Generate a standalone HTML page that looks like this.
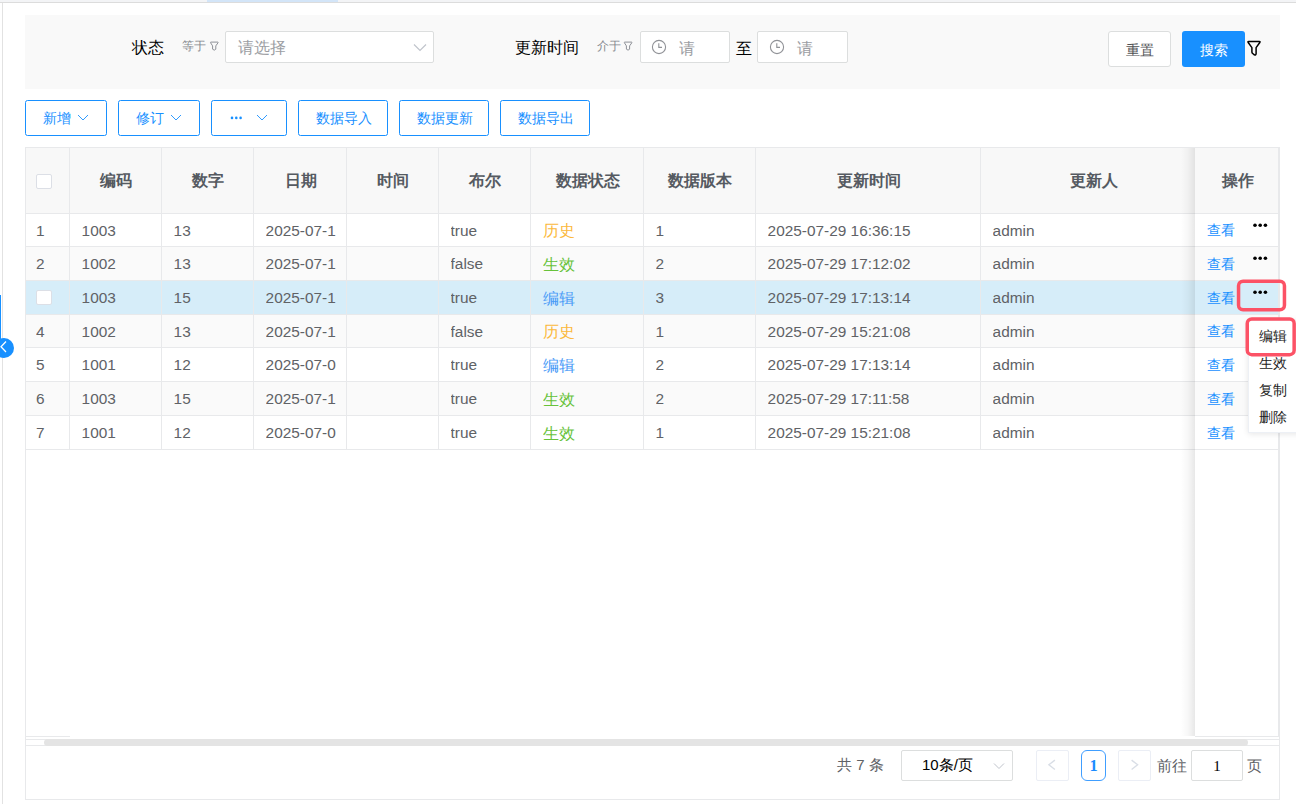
<!DOCTYPE html>
<html><head><meta charset="utf-8">
<style>
*{box-sizing:border-box;margin:0;padding:0}
html,body{width:1296px;height:804px;overflow:hidden;background:#fff;font-family:"Liberation Sans",sans-serif;}
.a{position:absolute}
.topstrip{left:0;top:0;width:1296px;height:2px;background:#f3f4f6}
.topline{left:0;top:2px;width:1296px;height:1px;background:#dcdcdc}
.toptab{left:207px;top:0;width:131px;height:2px;background:#d3e5f8}
.leftline{left:2px;top:3px;width:1px;height:801px;background:#e2e2e2}
.panel{left:25px;top:15px;width:1255px;height:74px;background:#f9f9f9}
.lbl{font-size:16px;color:#000;line-height:16px;white-space:nowrap}
.op{font-size:12px;color:#86898f;line-height:12px;white-space:nowrap}
.inp{background:#fff;border:1px solid #dcdede;border-radius:2px}
.ph{font-size:16px;color:#9c9ea3;line-height:16px;white-space:nowrap}
.btn{border:1px solid #1890ff;border-radius:2.5px;background:#fff;color:#1890ff;font-size:14px;line-height:14px;white-space:nowrap}
.btn span{position:absolute;top:10px}
.tbl{left:25px;top:147px;width:1255px;height:653px;border:1px solid #ebeef5}
.hdr{background:#f8f8f8}
.hl{font-size:16px;font-weight:bold;color:#555a61;line-height:16px;white-space:nowrap}
.cell{font-size:15.4px;color:#606266;line-height:15px;white-space:nowrap;overflow:hidden}
.vl{width:1px;background:#e8e9eb}
.hz{height:1px;background:#e8e9eb}
.cb{width:16px;height:15px;border:1px solid #dcdfe6;border-radius:2px;background:#fff}
.link{font-size:13.5px;color:#1890ff;line-height:13.5px;white-space:nowrap}
.dots{width:15px;height:5px}
.dots i{position:absolute;top:0;width:4.2px;height:4.2px;border-radius:50%;background:#000}
.menu{font-size:14px;color:#222;line-height:14px;white-space:nowrap}
.red{border:4px solid #f04c64;border-radius:6px}
</style></head><body>
<div class="a topstrip"></div>
<div class="a toptab"></div>
<div class="a topline"></div>
<div class="a leftline"></div>

<!-- search panel -->
<div class="a panel"></div>
<div class="a lbl" style="left:132px;top:40px">状态</div>
<div class="a op" style="left:182px;top:40px">等于</div>
<svg class="a" style="left:208px;top:39px" width="13" height="14" viewBox="208 39 13 14"><path d="M210.90 42.1H217.70Q218.40 42.1 218.00 42.8L215.80 45.9V49.2Q214.30 51.1 212.60 49.2V45.9L210.60 42.8Q210.20 42.1 210.90 42.1Z" fill="none" stroke="#8d9097" stroke-width="1" stroke-linejoin="round"/></svg>
<div class="a inp" style="left:225px;top:31px;width:209px;height:32px"></div>
<div class="a ph" style="left:238px;top:40px">请选择</div>
<svg class="a" style="left:413px;top:43px" width="14" height="9" viewBox="0 0 14 9"><path d="M1 1.5L7 7.5L13 1.5" fill="none" stroke="#c0c4cc" stroke-width="1.2"/></svg>

<div class="a lbl" style="left:514.5px;top:40px">更新时间</div>
<div class="a op" style="left:597px;top:40px">介于</div>
<svg class="a" style="left:622px;top:39px" width="13" height="14" viewBox="622 39 13 14"><path d="M624.70 42.1H631.50Q632.20 42.1 631.80 42.8L629.60 45.9V49.2Q628.10 51.1 626.40 49.2V45.9L624.40 42.8Q624.00 42.1 624.70 42.1Z" fill="none" stroke="#8d9097" stroke-width="1" stroke-linejoin="round"/></svg>
<div class="a inp" style="left:640px;top:31px;width:90px;height:32px"></div>
<svg class="a" style="left:651px;top:39px" width="16" height="16" viewBox="0 0 16 16"><circle cx="8" cy="8" r="6.6" fill="none" stroke="#909297" stroke-width="1.1"/><path d="M7.8 4.2V8.4H11" fill="none" stroke="#909297" stroke-width="1.1"/></svg>
<div class="a ph" style="left:679px;top:40.5px;width:17px;overflow:hidden">请</div>
<div class="a lbl" style="left:736px;top:41px">至</div>
<div class="a inp" style="left:757px;top:31px;width:91px;height:32px"></div>
<svg class="a" style="left:769px;top:39px" width="16" height="16" viewBox="0 0 16 16"><circle cx="8" cy="8" r="6.6" fill="none" stroke="#909297" stroke-width="1.1"/><path d="M7.8 4.2V8.4H11" fill="none" stroke="#909297" stroke-width="1.1"/></svg>
<div class="a ph" style="left:797px;top:40.5px">请</div>

<div class="a inp" style="left:1108px;top:31px;width:63px;height:36px;border-color:#dcdede;border-radius:3px"></div>
<div class="a" style="left:1126px;top:43px;font-size:14px;line-height:14px;color:#505255">重置</div>
<div class="a" style="left:1182px;top:31px;width:63px;height:36px;background:#1890ff;border-radius:3px"></div>
<div class="a" style="left:1200px;top:43px;font-size:14px;line-height:14px;color:#fff">搜索</div>
<svg class="a" style="left:1245px;top:38px" width="18" height="20" viewBox="1245 38 18 20"><path d="M1248.7 41.4H1259.3Q1260.5 41.4 1259.8 42.5L1256.1 47.6V53.7Q1255.9 55.5 1254.4 54.9L1252.7 53.5Q1251.9 52.9 1251.9 52V47.6L1248.2 42.5Q1247.5 41.4 1248.7 41.4Z" fill="none" stroke="#000" stroke-width="1.5" stroke-linejoin="round"/></svg>

<!-- toolbar -->
<div class="a btn" style="left:25px;top:100px;width:82px;height:36px"><span style="left:17px">新增</span></div>
<svg class="a" style="left:77px;top:114px" width="12" height="8" viewBox="0 0 12 8"><path d="M1 1L6 6L11 1" fill="none" stroke="#1890ff" stroke-width="0.9"/></svg>
<div class="a btn" style="left:118px;top:100px;width:82px;height:36px"><span style="left:17px">修订</span></div>
<svg class="a" style="left:170px;top:114px" width="12" height="8" viewBox="0 0 12 8"><path d="M1 1L6 6L11 1" fill="none" stroke="#1890ff" stroke-width="0.9"/></svg>
<div class="a btn" style="left:211px;top:100px;width:76px;height:36px"></div>
<svg class="a" style="left:230px;top:116px" width="14" height="4" viewBox="0 0 14 4"><circle cx="2" cy="1.9" r="1.3" fill="#1890ff"/><circle cx="6.3" cy="1.9" r="1.3" fill="#1890ff"/><circle cx="10.6" cy="1.9" r="1.3" fill="#1890ff"/></svg>
<svg class="a" style="left:256px;top:114px" width="12" height="8" viewBox="0 0 12 8"><path d="M1 1L6 6L11 1" fill="none" stroke="#1890ff" stroke-width="0.9"/></svg>
<div class="a btn" style="left:298px;top:100px;width:90px;height:36px"><span style="left:17px">数据导入</span></div>
<div class="a btn" style="left:399px;top:100px;width:90px;height:36px"><span style="left:17px">数据更新</span></div>
<div class="a btn" style="left:500px;top:100px;width:90px;height:36px"><span style="left:17px">数据导出</span></div>


































<!-- TABLE -->

<div class="a" style="left:25px;top:147px;width:1255px;height:653px;border:1px solid #e8e9eb"></div>
<div class="a hdr" style="left:26px;top:148px;width:1253px;height:65px"></div>
<div class="a hz" style="left:26px;top:213px;width:1253px"></div>
<div class="a" style="left:26px;top:214px;width:1253px;height:32px;background:#fff"></div>
<div class="a hz" style="left:26px;top:246px;width:1253px"></div>
<div class="a" style="left:26px;top:247px;width:1253px;height:33px;background:#fafafa"></div>
<div class="a hz" style="left:26px;top:280px;width:1253px"></div>
<div class="a" style="left:26px;top:281px;width:1253px;height:33px;background:#d6edf9"></div>
<div class="a hz" style="left:26px;top:314px;width:1253px"></div>
<div class="a" style="left:26px;top:315px;width:1253px;height:32px;background:#fafafa"></div>
<div class="a hz" style="left:26px;top:347px;width:1253px"></div>
<div class="a" style="left:26px;top:348px;width:1253px;height:33px;background:#fff"></div>
<div class="a hz" style="left:26px;top:381px;width:1253px"></div>
<div class="a" style="left:26px;top:382px;width:1253px;height:33px;background:#fafafa"></div>
<div class="a hz" style="left:26px;top:415px;width:1253px"></div>
<div class="a" style="left:26px;top:416px;width:1253px;height:33px;background:#fff"></div>
<div class="a hz" style="left:26px;top:449px;width:1253px"></div>
<div class="a vl" style="left:69px;top:148px;height:301px"></div>
<div class="a vl" style="left:161px;top:148px;height:301px"></div>
<div class="a vl" style="left:253px;top:148px;height:301px"></div>
<div class="a vl" style="left:346px;top:148px;height:301px"></div>
<div class="a vl" style="left:438px;top:148px;height:301px"></div>
<div class="a vl" style="left:530px;top:148px;height:301px"></div>
<div class="a vl" style="left:643px;top:148px;height:301px"></div>
<div class="a vl" style="left:755px;top:148px;height:301px"></div>
<div class="a vl" style="left:980px;top:148px;height:301px"></div>
<div class="a hl" style="left:70px;top:173px;width:92px;text-align:center">编码</div>
<div class="a hl" style="left:162px;top:173px;width:92px;text-align:center">数字</div>
<div class="a hl" style="left:254px;top:173px;width:93px;text-align:center">日期</div>
<div class="a hl" style="left:347px;top:173px;width:92px;text-align:center">时间</div>
<div class="a hl" style="left:439px;top:173px;width:92px;text-align:center">布尔</div>
<div class="a hl" style="left:531px;top:173px;width:113px;text-align:center">数据状态</div>
<div class="a hl" style="left:644px;top:173px;width:112px;text-align:center">数据版本</div>
<div class="a hl" style="left:756px;top:173px;width:225px;text-align:center">更新时间</div>
<div class="a hl" style="left:986px;top:173px;width:215px;text-align:center">更新人</div>
<div class="a hl" style="left:1196px;top:173px;width:84px;text-align:center">操作</div>
<div class="a cb" style="left:36px;top:174px"></div>
<div class="a cell" style="left:36px;top:222.5px">1</div>
<div class="a cell" style="left:81.6px;top:222.5px;width:70px">1003</div>
<div class="a cell" style="left:173.6px;top:222.5px;width:70px">13</div>
<div class="a cell" style="left:265.6px;top:222.5px;width:70.5px">2025-07-16</div>
<div class="a cell" style="left:450.6px;top:222.5px;width:70px">true</div>
<div class="a cell" style="left:542.5px;top:223.0px;color:#fbb93c;font-size:16px">历史</div>
<div class="a cell" style="left:655.6px;top:222.5px;width:90px">1</div>
<div class="a cell" style="left:767.6px;top:222.5px;width:203px">2025-07-29 16:36:15</div>
<div class="a cell" style="left:992.6px;top:222.5px;width:193px">admin</div>
<div class="a cell" style="left:36px;top:256.0px">2</div>
<div class="a cell" style="left:81.6px;top:256.0px;width:70px">1002</div>
<div class="a cell" style="left:173.6px;top:256.0px;width:70px">13</div>
<div class="a cell" style="left:265.6px;top:256.0px;width:70.5px">2025-07-16</div>
<div class="a cell" style="left:450.6px;top:256.0px;width:70px">false</div>
<div class="a cell" style="left:542.5px;top:256.5px;color:#67c23a;font-size:16px">生效</div>
<div class="a cell" style="left:655.6px;top:256.0px;width:90px">2</div>
<div class="a cell" style="left:767.6px;top:256.0px;width:203px">2025-07-29 17:12:02</div>
<div class="a cell" style="left:992.6px;top:256.0px;width:193px">admin</div>
<div class="a cb" style="left:36px;top:290px"></div>
<div class="a cell" style="left:81.6px;top:290.0px;width:70px">1003</div>
<div class="a cell" style="left:173.6px;top:290.0px;width:70px">15</div>
<div class="a cell" style="left:265.6px;top:290.0px;width:70.5px">2025-07-16</div>
<div class="a cell" style="left:450.6px;top:290.0px;width:70px">true</div>
<div class="a cell" style="left:542.5px;top:290.5px;color:#4a9bf7;font-size:16px">编辑</div>
<div class="a cell" style="left:655.6px;top:290.0px;width:90px">3</div>
<div class="a cell" style="left:767.6px;top:290.0px;width:203px">2025-07-29 17:13:14</div>
<div class="a cell" style="left:992.6px;top:290.0px;width:193px">admin</div>
<div class="a cell" style="left:36px;top:323.5px">4</div>
<div class="a cell" style="left:81.6px;top:323.5px;width:70px">1002</div>
<div class="a cell" style="left:173.6px;top:323.5px;width:70px">13</div>
<div class="a cell" style="left:265.6px;top:323.5px;width:70.5px">2025-07-16</div>
<div class="a cell" style="left:450.6px;top:323.5px;width:70px">false</div>
<div class="a cell" style="left:542.5px;top:324.0px;color:#fbb93c;font-size:16px">历史</div>
<div class="a cell" style="left:655.6px;top:323.5px;width:90px">1</div>
<div class="a cell" style="left:767.6px;top:323.5px;width:203px">2025-07-29 15:21:08</div>
<div class="a cell" style="left:992.6px;top:323.5px;width:193px">admin</div>
<div class="a cell" style="left:36px;top:357.0px">5</div>
<div class="a cell" style="left:81.6px;top:357.0px;width:70px">1001</div>
<div class="a cell" style="left:173.6px;top:357.0px;width:70px">12</div>
<div class="a cell" style="left:265.6px;top:357.0px;width:70.5px">2025-07-09</div>
<div class="a cell" style="left:450.6px;top:357.0px;width:70px">true</div>
<div class="a cell" style="left:542.5px;top:357.5px;color:#4a9bf7;font-size:16px">编辑</div>
<div class="a cell" style="left:655.6px;top:357.0px;width:90px">2</div>
<div class="a cell" style="left:767.6px;top:357.0px;width:203px">2025-07-29 17:13:14</div>
<div class="a cell" style="left:992.6px;top:357.0px;width:193px">admin</div>
<div class="a cell" style="left:36px;top:391.0px">6</div>
<div class="a cell" style="left:81.6px;top:391.0px;width:70px">1003</div>
<div class="a cell" style="left:173.6px;top:391.0px;width:70px">15</div>
<div class="a cell" style="left:265.6px;top:391.0px;width:70.5px">2025-07-16</div>
<div class="a cell" style="left:450.6px;top:391.0px;width:70px">true</div>
<div class="a cell" style="left:542.5px;top:391.5px;color:#67c23a;font-size:16px">生效</div>
<div class="a cell" style="left:655.6px;top:391.0px;width:90px">2</div>
<div class="a cell" style="left:767.6px;top:391.0px;width:203px">2025-07-29 17:11:58</div>
<div class="a cell" style="left:992.6px;top:391.0px;width:193px">admin</div>
<div class="a cell" style="left:36px;top:425.0px">7</div>
<div class="a cell" style="left:81.6px;top:425.0px;width:70px">1001</div>
<div class="a cell" style="left:173.6px;top:425.0px;width:70px">12</div>
<div class="a cell" style="left:265.6px;top:425.0px;width:70.5px">2025-07-09</div>
<div class="a cell" style="left:450.6px;top:425.0px;width:70px">true</div>
<div class="a cell" style="left:542.5px;top:425.5px;color:#67c23a;font-size:16px">生效</div>
<div class="a cell" style="left:655.6px;top:425.0px;width:90px">1</div>
<div class="a cell" style="left:767.6px;top:425.0px;width:203px">2025-07-29 15:21:08</div>
<div class="a cell" style="left:992.6px;top:425.0px;width:193px">admin</div>
<div class="a" style="left:1181px;top:148px;width:14px;height:588px;background:linear-gradient(to right,rgba(0,0,0,0),rgba(0,0,0,0.03) 50%,rgba(0,0,0,0.09))"></div>
<div class="a hdr" style="left:1195px;top:148px;width:84px;height:65px"></div>
<div class="a hz" style="left:1195px;top:213px;width:84px"></div>
<div class="a hl" style="left:1196px;top:173px;width:84px;text-align:center">操作</div>
<div class="a" style="left:1195px;top:214px;width:84px;height:32px;background:#fff"></div>
<div class="a hz" style="left:1195px;top:246px;width:84px"></div>
<div class="a link" style="left:1207px;top:224.25px">查看</div>
<svg class="a" style="left:1250px;top:221px" width="20" height="9" viewBox="1250 221 20 9"><circle cx="1255" cy="225.2" r="1.8"/><circle cx="1260.2" cy="225.2" r="1.8"/><circle cx="1265.4" cy="225.2" r="1.8"/></svg>
<div class="a" style="left:1195px;top:247px;width:84px;height:33px;background:#fafafa"></div>
<div class="a hz" style="left:1195px;top:280px;width:84px"></div>
<div class="a link" style="left:1207px;top:257.75px">查看</div>
<svg class="a" style="left:1250px;top:254px" width="20" height="9" viewBox="1250 254 20 9"><circle cx="1255" cy="258.2" r="1.8"/><circle cx="1260.2" cy="258.2" r="1.8"/><circle cx="1265.4" cy="258.2" r="1.8"/></svg>
<div class="a" style="left:1195px;top:281px;width:84px;height:33px;background:#d6edf9"></div>
<div class="a hz" style="left:1195px;top:314px;width:84px"></div>
<div class="a link" style="left:1207px;top:291.75px">查看</div>
<svg class="a" style="left:1250px;top:288px" width="20" height="9" viewBox="1250 288 20 9"><circle cx="1255" cy="292.2" r="1.8"/><circle cx="1260.2" cy="292.2" r="1.8"/><circle cx="1265.4" cy="292.2" r="1.8"/></svg>
<div class="a" style="left:1195px;top:315px;width:84px;height:32px;background:#fafafa"></div>
<div class="a hz" style="left:1195px;top:347px;width:84px"></div>
<div class="a link" style="left:1207px;top:325.25px">查看</div>
<svg class="a" style="left:1250px;top:322px" width="20" height="9" viewBox="1250 322 20 9"><circle cx="1255" cy="326.2" r="1.8"/><circle cx="1260.2" cy="326.2" r="1.8"/><circle cx="1265.4" cy="326.2" r="1.8"/></svg>
<div class="a" style="left:1195px;top:348px;width:84px;height:33px;background:#fff"></div>
<div class="a hz" style="left:1195px;top:381px;width:84px"></div>
<div class="a link" style="left:1207px;top:358.75px">查看</div>
<svg class="a" style="left:1250px;top:355px" width="20" height="9" viewBox="1250 355 20 9"><circle cx="1255" cy="359.2" r="1.8"/><circle cx="1260.2" cy="359.2" r="1.8"/><circle cx="1265.4" cy="359.2" r="1.8"/></svg>
<div class="a" style="left:1195px;top:382px;width:84px;height:33px;background:#fafafa"></div>
<div class="a hz" style="left:1195px;top:415px;width:84px"></div>
<div class="a link" style="left:1207px;top:392.75px">查看</div>
<svg class="a" style="left:1250px;top:389px" width="20" height="9" viewBox="1250 389 20 9"><circle cx="1255" cy="393.2" r="1.8"/><circle cx="1260.2" cy="393.2" r="1.8"/><circle cx="1265.4" cy="393.2" r="1.8"/></svg>
<div class="a" style="left:1195px;top:416px;width:84px;height:33px;background:#fff"></div>
<div class="a hz" style="left:1195px;top:449px;width:84px"></div>
<div class="a link" style="left:1207px;top:426.75px">查看</div>
<svg class="a" style="left:1250px;top:423px" width="20" height="9" viewBox="1250 423 20 9"><circle cx="1255" cy="427.2" r="1.8"/><circle cx="1260.2" cy="427.2" r="1.8"/><circle cx="1265.4" cy="427.2" r="1.8"/></svg>
<div class="a" style="left:1195px;top:450px;width:84px;height:286px;background:#fff"></div>
<div class="a hz" style="left:1195px;top:736px;width:84px"></div>
<div class="a vl" style="left:1278px;top:148px;height:589px"></div>
<div class="a hz" style="left:26px;top:736px;width:44px"></div>
<div class="a hz" style="left:26px;top:739px;width:1253px"></div>
<div class="a hz" style="left:26px;top:745px;width:1253px"></div>
<div class="a" style="left:44px;top:739px;width:1204px;height:7px;background:#e4e4e4;border-radius:3.5px"></div>
<div class="a" style="left:837px;top:757px;font-size:15px;line-height:15px;color:#606266;white-space:pre">共 7 条</div>
<div class="a inp" style="left:901px;top:750px;width:112px;height:31px"></div>
<div class="a" style="left:922px;top:757px;font-size:15px;line-height:15px;color:#000;white-space:nowrap">10条/页</div>
<svg class="a" style="left:993px;top:762px" width="12" height="8" viewBox="0 0 12 8"><path d="M1 1.5L6 6.5L11 1.5" fill="none" stroke="#c0c4cc" stroke-width="1"/></svg>
<div class="a" style="left:1036px;top:750px;width:33px;height:31px;border:1px solid #ebeef5;border-radius:2px;background:#fff"></div>
<svg class="a" style="left:1046px;top:758px" width="12" height="14" viewBox="1046 758 12 14"><path d="M1054.9 760.1L1048.9 764.8L1054.9 769.5" fill="none" stroke="#d9dee6" stroke-width="1.4"/></svg>
<div class="a" style="left:1081px;top:750px;width:25px;height:31px;border:1px solid #409eff;border-radius:6px;background:#fff"></div>
<div class="a" style="left:1081px;top:757.5px;width:25px;text-align:center;font-family:'Liberation Serif',serif;font-weight:bold;font-size:16.5px;line-height:16px;color:#1b8cff">1</div>
<div class="a" style="left:1118px;top:750px;width:33px;height:31px;border:1px solid #ebeef5;border-radius:2px;background:#fff"></div>
<svg class="a" style="left:1128px;top:758px" width="12" height="14" viewBox="1128 758 12 14"><path d="M1131.6 760.1L1137.6 764.8L1131.6 769.5" fill="none" stroke="#d9dee6" stroke-width="1.4"/></svg>
<div class="a" style="left:1157px;top:758px;font-size:15px;line-height:15px;color:#606266">前往</div>
<div class="a inp" style="left:1191px;top:750px;width:52px;height:31px"></div>
<div class="a" style="left:1191px;top:759px;width:52px;text-align:center;font-family:'Liberation Serif',serif;font-size:15px;line-height:15px;color:#000">1</div>
<div class="a" style="left:1247px;top:758px;font-size:15px;line-height:15px;color:#606266">页</div>
<div class="a" style="left:1248px;top:320px;width:60px;height:113px;background:#fff;border:1px solid #edf0f5;box-shadow:0 1px 6px rgba(0,0,0,0.1)"></div>
<div class="a menu" style="left:1259px;top:329px">编辑</div>
<div class="a menu" style="left:1259px;top:356px">生效</div>
<div class="a menu" style="left:1259px;top:383px">复制</div>
<div class="a menu" style="left:1259px;top:410px">删除</div>
<svg class="a" style="left:1230px;top:270px" width="66" height="95" viewBox="1230 270 66 95"><rect x="1238.55" y="281.15" width="45.9" height="28.7" rx="4.5" fill="none" stroke="#fc5266" stroke-width="3.5"/><rect x="1247.25" y="318.95" width="46.9" height="35.7" rx="4.5" fill="none" stroke="#fc5266" stroke-width="3.5"/></svg>
<div class="a" style="left:0;top:295px;width:1px;height:45px;background:#1890ff"></div>
<div class="a" style="left:-6px;top:338px;width:20px;height:20px;border-radius:50%;background:#1890ff"></div>
<svg class="a" style="left:0;top:340px" width="8" height="14" viewBox="0 0 8 14"><path d="M6 1.5L1 6.8L6 12" fill="none" stroke="#fff" stroke-width="1.3"/></svg>

</body></html>
